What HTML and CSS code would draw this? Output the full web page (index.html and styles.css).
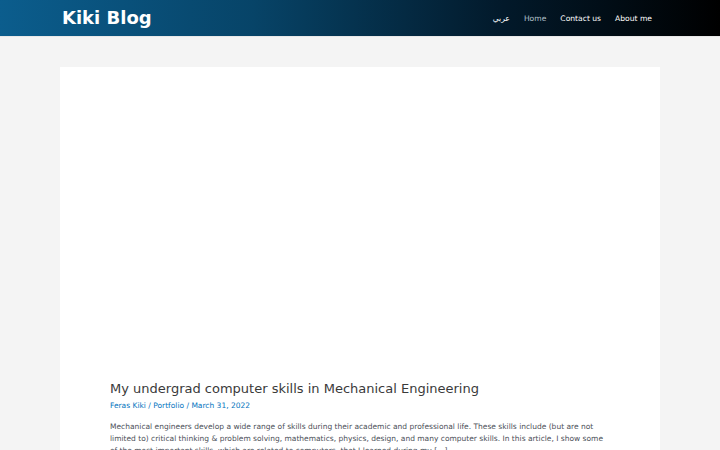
FILE: index.html
```html
<!DOCTYPE html>
<html lang="en">
<head>
<meta charset="utf-8">
<title>Kiki Blog</title>
<link rel="stylesheet" href="styles.css">
</head>
<body>
<header class="site-header">
  <div class="header-inner">
    <a class="site-title" href="#">Kiki Blog</a>
    <nav class="main-nav">
      <a href="#" class="nav-link" lang="ar" dir="rtl">عربي</a>
      <a href="#" class="nav-link current">Home</a>
      <a href="#" class="nav-link">Contact us</a>
      <a href="#" class="nav-link">About me</a>
    </nav>
  </div>
</header>
<main class="site-content">
  <article class="post-card">
    <div class="post-thumb"></div>
    <h2 class="post-title">My undergrad computer skills in Mechanical Engineering</h2>
    <div class="post-meta"><a href="#">Feras Kiki</a> / <a href="#">Portfolio</a> / <span>March 31, 2022</span></div>
    <p class="post-excerpt">Mechanical engineers develop a wide range of skills during their academic and professional life. These skills include (but are not limited to) critical thinking &amp; problem solving, mathematics, physics, design, and many computer skills. In this article, I show some of the most important skills, which are related to computers, that I learned during my […]</p>
  </article>
</main>
</body>
</html>
```
FILE: styles.css
```css
* { box-sizing: border-box; }

html, body {
  margin: 0;
  padding: 0;
  height: 100%;
}

body {
  background: #f4f4f4;
  font-family: "DejaVu Sans", sans-serif;
  overflow: hidden;
}

a { text-decoration: none; color: inherit; }

.site-header {
  height: 37px;
  background: linear-gradient(90deg, #0b5d8d 0%, #074468 35%, #02192a 70%, #000 100%);
  border-bottom: 1px solid #e8e8e8;
}

.header-inner {
  width: 600px;
  margin: 0 auto;
  height: 36px;
  display: flex;
  align-items: center;
  justify-content: space-between;
  padding: 0 8px 0 2px;
}

.site-title {
  color: #fff;
  font-weight: bold;
  font-size: 18px;
  line-height: 1;
}

.main-nav {
  display: flex;
  gap: 14px;
  align-items: center;
  padding-top: 2px;
}

.nav-link {
  color: #fff;
  font-size: 7.6px;
  line-height: 1;
}

.nav-link.current { color: #b5c2cc; }

.site-content {
  width: 600px;
  margin: 30px auto 0;
}

.post-card {
  background: #fff;
  padding: 0 50px 40px;
}

.post-thumb {
  height: 313px;
}

.post-title {
  margin: 0;
  font-weight: normal;
  font-size: 13px;
  line-height: 18px;
  color: #3a3a3a;
}

.post-meta {
  font-size: 7.5px;
  line-height: 12px;
  color: #0274be;
  margin-top: 2px;
}

.post-meta a { color: #0274be; }

.post-excerpt {
  margin: 9px 0 0;
  font-size: 7.5px;
  line-height: 12px;
  color: #4b4f58;
}
```
